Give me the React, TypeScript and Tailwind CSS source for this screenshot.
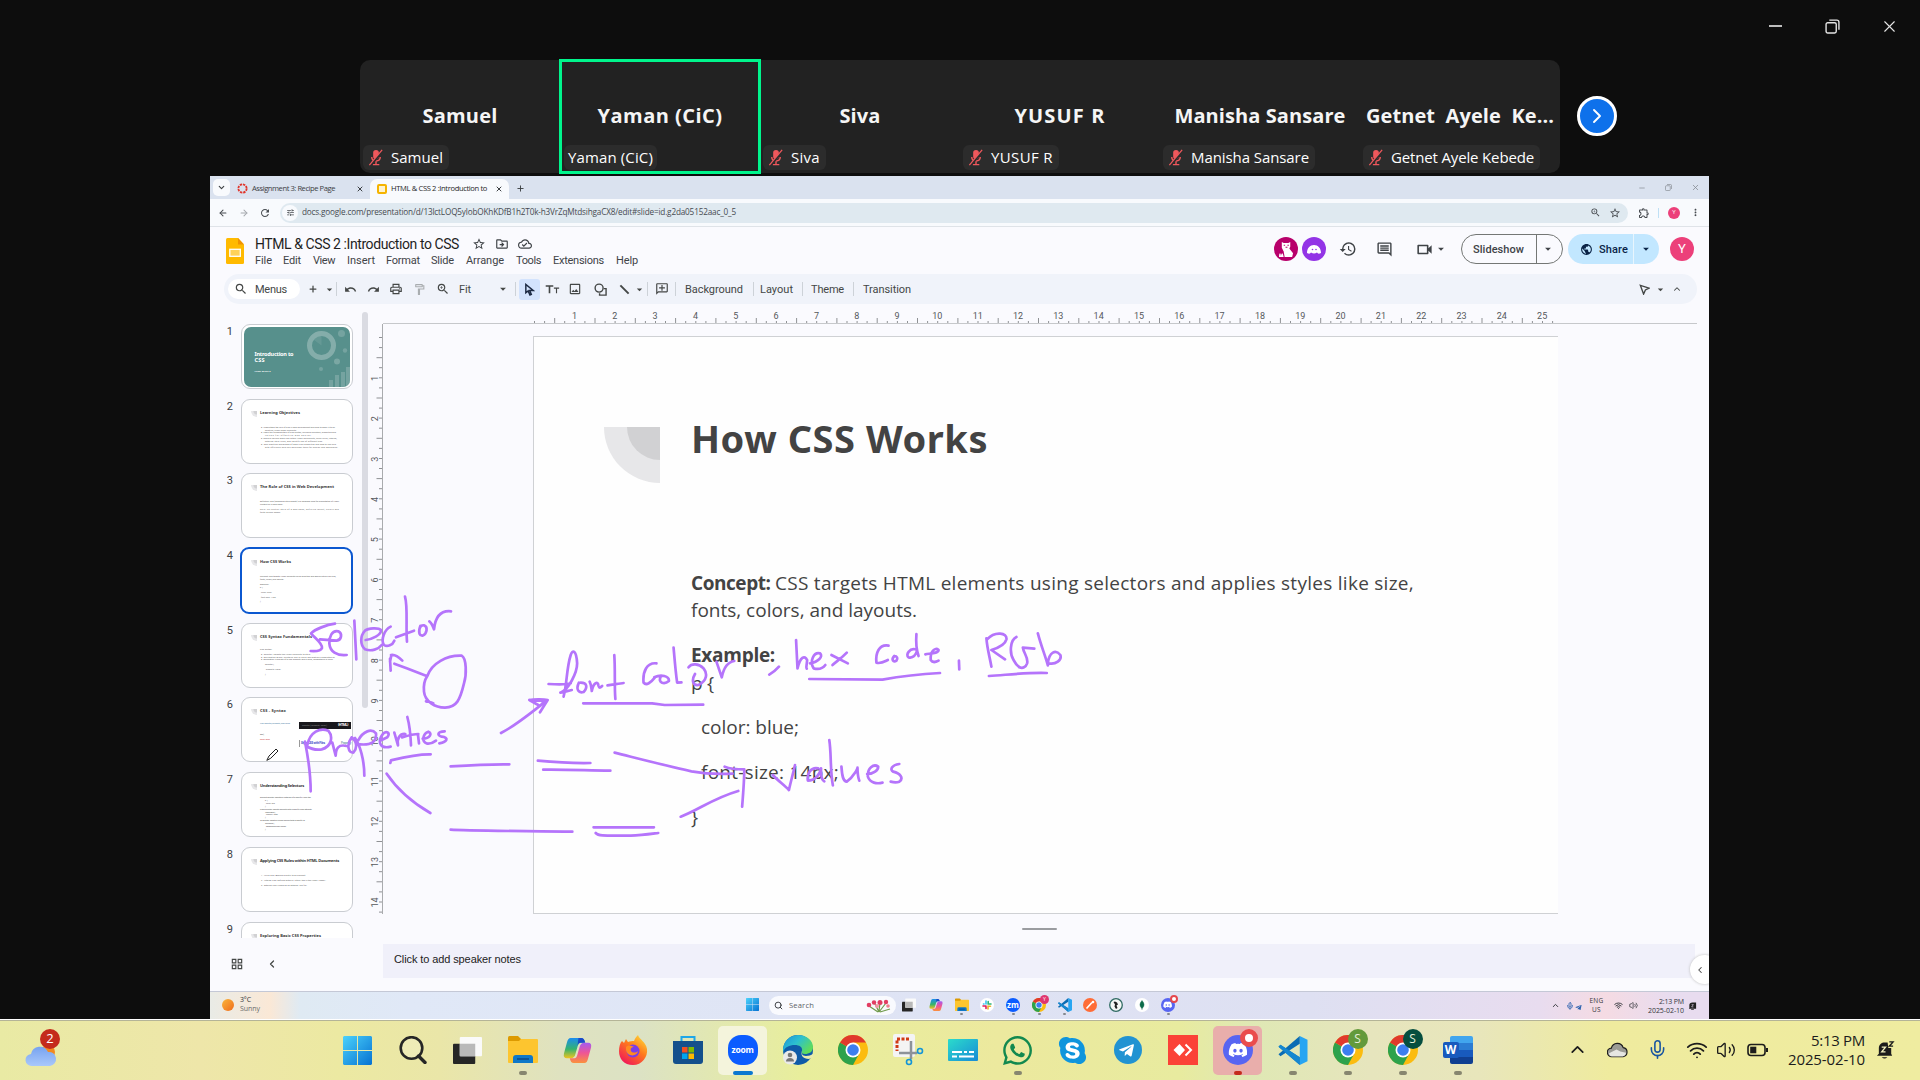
import { useLayoutEffect, useRef, useState, type ReactNode } from "react";
import { Minus, X, ChevronRight, ChevronLeft, ChevronUp, ChevronDown, Plus, ArrowLeft, ArrowRight, Mic, Wifi, Volume2, Search } from "lucide-react";
import { FaDiscord, FaWhatsapp, FaTelegramPlane, FaSkype } from "react-icons/fa";
import {
  MdOutlineStarBorder, MdOutlineDriveFileMove, MdOutlineCloudDone, MdHistory, MdOutlineComment, MdOutlineVideocam,
  MdPublic, MdSearch, MdUndo, MdRedo, MdOutlinePrint, MdOutlineFormatPaint, MdZoomIn, MdArrowDropDown, MdTitle,
  MdOutlineImage, MdOutlineAddComment, MdMoreVert, MdOutlineExtension, MdRefresh, MdOutlineGridView, MdTune,
} from "react-icons/md";

/* Text set to a given measure by adjusting its letter spacing. */
function Fit({ w, children, className = "" }: { w: number; children: string; className?: string }) {
  const ref = useRef<HTMLSpanElement>(null);
  const [ls, setLs] = useState(0);
  useLayoutEffect(() => {
    if (ref.current) {
      const natural = ref.current.getBoundingClientRect().width;
      setLs((w - natural) / children.length);
    }
  }, []);
  return (
    <span ref={ref} style={{ letterSpacing: ls }} className={`inline-block w-max shrink-0 whitespace-pre leading-none ${className}`}>
      {children}
    </span>
  );
}

const Slot = ({ c, children }: { c: string; children?: ReactNode }) => (
  <div className={`flex shrink-0 items-center justify-center ${c}`}>{children}</div>
);

/* ---------- Meeting header ---------- */

const people = [
  { name: "Samuel", bw: 75, sw: 52, muted: true },
  { name: "Yaman (CiC)", bw: 125, sw: 85, muted: false },
  { name: "Siva", bw: 41, sw: 29, muted: true },
  { name: "YUSUF R", bw: 91, sw: 62, muted: true },
  { name: "Manisha Sansare", bw: 171, sw: 118, muted: true },
  { name: "Getnet Ayele Kebede", bw: 188, sw: 143, muted: true },
];

function Tile({ p }: { p: (typeof people)[number] }) {
  return (
    <div className={`flex shrink-0 flex-col ${p.muted ? "h-[113px] w-[200px]" : "-my-px -ml-px h-[115px] w-[202px] -mr-px border-[3px] border-[#00f58c]"}`}>
      <div className={`flex justify-center ${p.muted ? "mt-[44px]" : "mt-[42px]"} h-[24px] items-center`}>
        <Fit w={p.bw} className="text-[20px] font-bold text-[#f5f5f5]">
          {p.name === "Getnet Ayele Kebede" ? "Getnet  Ayele  Ke..." : p.name}
        </Fit>
      </div>
      <div className={`flex h-[25px] items-center self-start rounded-md bg-[#2c2c2c] text-white ${p.muted ? "ml-[3px] mt-[17px] pr-[6px]" : "ml-[2px] mt-[17px] px-[4px]"}`}>
        {p.muted && (
          <span className="mr-[7px] flex w-[21px] justify-end">
            <svg viewBox="0 0 16 18" className="h-[17px] w-[16px]">
              <rect x="5" y="1" width="6" height="10" rx="3" fill="#f0585c" />
              <path d="M3.5 8.500C3.500 14 12.500 14 12.500 8.500M8 13v3M4.500 16.500h7" stroke="#f0585c" strokeWidth="1.500" fill="none" />
              <path d="M16 1L2.500 17" stroke="#2c2c2c" strokeWidth="2.500" />
              <path d="M14.500 1L1 17" stroke="#f0585c" strokeWidth="1.400" />
            </svg>
          </span>
        )}
        <Fit w={p.sw} className="text-[15px]">{p.name}</Fit>
      </div>
    </div>
  );
}

/* ---------- App logos ---------- */

const WinLogo = ({ c }: { c: string }) => (
  <svg viewBox="0 0 30 30" className={c}>
    <defs>
      <linearGradient id="wl" x1="0" y1="0" x2="1" y2="1"><stop offset="0" stopColor="#4cd2fb" /><stop offset="1" stopColor="#0672d2" /></linearGradient>
    </defs>
    <path d="M1 0h13.500v14.500H0V1zM15.500 0H29l1 1v13.500H15.500zM0 15.500h14.500V30H1l-1-1zM15.500 15.500H30V29l-1 1H15.500z" fill="url(#wl)" />
  </svg>
);
const TaskView = ({ c }: { c: string }) => (
  <svg viewBox="0 0 30 30" className={c}>
    <rect x="0" y="8" width="23" height="21" rx="1" fill="#262626" />
    <rect x="7" y="1" width="23" height="20" rx="1" fill="#fafafa" />
    <rect x="7" y="8" width="16" height="13" fill="#b9b9b9" />
  </svg>
);
const Folder = ({ c }: { c: string }) => (
  <svg viewBox="0 0 30 30" className={c}>
    <path d="M0 2.500Q0 1 1.500 1H10l3 3v4H0z" fill="#dd9a00" />
    <path d="M0 6h11l2-2h16q1 0 1 1v22q0 1-1 1H1q-1 0-1-1z" fill="#fdc52f" />
    <path d="M5 28v-5q0-3 3-3h14q3 0 3 3v5z" fill="#0f78c8" />
    <path d="M9 24h12" stroke="#073d78" strokeWidth="1.200" />
  </svg>
);
const Copilot = ({ c }: { c: string }) => (
  <svg viewBox="0 0 30 30" className={c}>
    <defs>
      <linearGradient id="cpa" x1="0" y1="0" x2="0" y2="1"><stop offset="0" stopColor="#1a8cf0" /><stop offset=".55" stopColor="#35b36e" /><stop offset="1" stopColor="#f2c41d" /></linearGradient>
      <linearGradient id="cpb" x1="0" y1="0" x2="0" y2="1"><stop offset="0" stopColor="#a45bf0" /><stop offset=".5" stopColor="#ee5596" /><stop offset="1" stopColor="#fb923c" /></linearGradient>
    </defs>
    <path d="M8 2h11q3 0 4 5h-5q-2 0-3 4l-2 7q-1 5-5 5H4q-4 0-3-5L4 7q1-5 4-5z" fill="url(#cpa)" />
    <path d="M16 2h3q3 0 4 5h-5q-2 0-3 3z" fill="#1b49c8" />
    <path d="M22 28H11q-3 0-4-5h5q2 0 3-4l2-7q1-5 5-5h4q4 0 3 5l-3 11q-1 5-4 5z" fill="url(#cpb)" />
  </svg>
);
const Chrome = ({ c }: { c: string }) => (
  <svg viewBox="0 0 30 30" className={c}>
    <circle cx="15" cy="15" r="15" fill="#fbbc10" />
    <path d="M15 15L2 7.500A15 15 0 0 0 15 30l6-11z" fill="#2da24c" />
    <path d="M15 15L2 7.500A15 15 0 0 1 28 7.500H15z" fill="#e0392c" />
    <circle cx="15" cy="15" r="7.500" fill="#fff" />
    <circle cx="15" cy="15" r="5.800" fill="#3c7ef0" />
  </svg>
);
const VsCode = ({ c }: { c: string }) => (
  <svg viewBox="0 0 30 30" className={c}>
    <path d="M22 0L30 4v22l-8 4z" fill="#27a5f2" />
    <path d="M2 9L0 11l22 19V22z" fill="#1276bd" />
    <path d="M2 21L0 19 22 0v8z" fill="#0a6cb4" />
    <path d="M2 9L0 11l22 19v-8z" fill="#1587d0" />
  </svg>
);
const Discord = ({ c, dot }: { c: string; dot: string }) => (
  <div className={`relative flex items-center justify-center rounded-full bg-[#5865f2] text-white ${c}`}>
    <FaDiscord className="h-2/3 w-2/3" />
    <span className={`absolute rounded-full bg-white ${dot}`} />
  </div>
);
const Firefox = () => (
  <svg viewBox="0 0 30 30" className="h-[30px] w-[30px]">
    <defs>
      <linearGradient id="ff" x1=".9" y1="0" x2=".2" y2="1"><stop offset="0" stopColor="#ffe03a" /><stop offset=".45" stopColor="#ff7a1c" /><stop offset="1" stopColor="#f0125c" /></linearGradient>
    </defs>
    <path d="M4 6l2 2 2-4 2 3c2-1 4-1 6-1 1-3 3-5 4-6 1 4 8 7 9 14 1 8-5 16-14 16S1 24 1 16C1 12 2 8 4 6z" fill="url(#ff)" />
    <circle cx="15" cy="16" r="6.500" fill="#7a3ce8" />
    <path d="M8 12c3-3 6-1 8 0-2 0-4 1-3 4 1 2 5 2 7 0-1 6-11 6-12-1z" fill="#ff8a20" />
  </svg>
);
const Store = () => (
  <svg viewBox="0 0 30 30" className="h-[30px] w-[30px]">
    <path d="M8.500 8V2h13v6" stroke="#1ea7e8" strokeWidth="2" fill="none" />
    <path d="M0 6h30v20q0 3-3 3H3q-3 0-3-3z" fill="#14508c" />
    <path d="M9 12h5.500v5.500H9z" fill="#f25022" /><path d="M15.500 12H21v5.500h-5.500z" fill="#7fba00" />
    <path d="M9 18.500h5.500V24H9z" fill="#00a4ef" /><path d="M15.500 18.500H21V24h-5.500z" fill="#ffb900" />
  </svg>
);
const Edge = () => (
  <svg viewBox="0 0 30 30" className="h-[30px] w-[30px]">
    <defs>
      <linearGradient id="eg" x1="0" y1="0" x2="1" y2=".6"><stop offset="0" stopColor="#1b8fd8" /><stop offset=".5" stopColor="#2cc0d0" /><stop offset="1" stopColor="#5fdc5a" /></linearGradient>
    </defs>
    <circle cx="15" cy="15" r="15" fill="#0f5ba8" />
    <path d="M0 14C1 5 8 0 15 0c9 0 15 6 15 12 0 5-4 7-8 7-3 0-4-1-3-3 1-4-3-6-7-6-6 0-10 2-12 7z" fill="url(#eg)" />
    <path d="M19 15c-1 3 0 6 4 6 3 0 5-1 7-2v3l-4 2c-6 0-9-4-7-9z" fill="#eaecae" />
    <circle cx="7" cy="22.500" r="7" fill="#e9e9e9" />
    <circle cx="7" cy="20" r="2.300" fill="#777" /><path d="M3 26.500q0-3.500 4-3.500t4 3.500z" fill="#777" />
  </svg>
);
const Snip = () => (
  <svg viewBox="0 0 30 30" className="h-[30px] w-[30px] overflow-visible">
    <rect x="0" y="-1" width="22" height="23" rx="2" fill="#f4f4f4" />
    <path d="M16 4H4v12" stroke="#d03a14" strokeWidth="3" strokeDasharray="3 1.500" fill="none" />
    <path d="M18 6v18M6 18h18" stroke="#8d9299" strokeWidth="2.500" />
    <circle cx="27" cy="16" r="2.500" stroke="#1495d8" strokeWidth="1.600" fill="none" /><circle cx="16" cy="27" r="2.500" stroke="#1495d8" strokeWidth="1.600" fill="none" />
    <path d="M18 24l-1 1M24 17.500h1" stroke="#1495d8" strokeWidth="1.600" />
  </svg>
);
const Captions = () => (
  <svg viewBox="0 0 30 22" className="h-[22px] w-[30px]">
    <defs><linearGradient id="cc" x1="0" y1="0" x2="1" y2="1"><stop offset="0" stopColor="#2bdccb" /><stop offset="1" stopColor="#188bd6" /></linearGradient></defs>
    <rect width="30" height="22" rx="1" fill="url(#cc)" />
    <path d="M4 13h10M16 13h3M21 13h5M4 17.500h5M11 17.500h15" stroke="#fff" strokeWidth="1.800" />
  </svg>
);
const Word = () => (
  <div className="relative h-[28px] w-[30px]">
    <div className="ml-[7px] flex h-full w-[23px] flex-col overflow-hidden rounded-[2px]">
      <div className="h-[7px] bg-[#41a5ee]" /><div className="h-[7px] bg-[#2b7cd3]" /><div className="h-[7px] bg-[#185abd]" /><div className="h-[7px] bg-[#103f91]" />
    </div>
    <div className="absolute left-0 top-[6px] flex h-[16px] w-[16px] items-center justify-center rounded-[2px] bg-[#185abd] text-[12px] font-bold text-white">W</div>
  </div>
);
const Bell = ({ c }: { c: string }) => (
  <svg viewBox="0 0 20 20" className={c}>
    <path d="M3 14V8c0-4 3-6 6-6h7v12l1 2H1z" fill="#1c1c1c" />
    <path d="M6 17.500h6q-3 3-6 0z" fill="#1c1c1c" />
    <path d="M6 7h4l-4 5h4" stroke="#f2f0c0" strokeWidth="1.400" fill="none" />
    <path d="M12 0h8v8h-7z" fill="#efeca0" />
    <path d="M14 1.500h4L14 6h4" stroke="#1c1c1c" strokeWidth="1.400" fill="none" />
  </svg>
);

/* ---------- Browser window ---------- */

const Restore = ({ c }: { c: string }) => (
  <svg viewBox="0 0 14 14" className={c} fill="none" stroke="currentColor" strokeWidth="1.300">
    <rect x="1" y="3.500" width="9.500" height="9.500" rx="1.500" /><path d="M4 1h7q2 0 2 2v7" />
  </svg>
);

function TabStrip() {
  return (
    <div className="flex h-[23px] shrink-0 items-end bg-[#dae2ef] pl-[3px] text-[#3c4043]">
      <Slot c="mb-[3px] h-[17px] w-[17px] rounded-[5px] bg-[#f8fafd]"><ChevronDown size={9} strokeWidth={3} /></Slot>
      <div className="flex h-[21px] w-[140px] items-center pl-[7px]">
        <svg viewBox="0 0 12 12" className="mr-[4px] h-[11px] w-[11px]"><circle cx="6" cy="6" r="4.500" fill="none" stroke="#e0352b" strokeWidth="2" strokeDasharray="2.600 .93" /></svg>
        <Fit w={83} className="text-[7.600px]">Assignment 3: Recipe Page</Fit>
        <X size={8} strokeWidth={3} className="ml-[21px]" />
      </div>
      <div className="flex h-[20px] w-[139px] items-center rounded-t-[7px] bg-[#f8fafd] pl-[7px]">
        <div className="mr-[4px] h-[10px] w-[10px] rounded-[2px] border-2 border-[#f5b400] bg-[#fff3cd]" />
        <Fit w={96} className="text-[7.600px] text-[#1f1f1f]">HTML &amp; CSS 2 :Introduction to</Fit>
        <X size={8} strokeWidth={3} className="ml-[8px]" />
      </div>
      <Slot c="h-[21px] w-[23px]"><Plus size={9} strokeWidth={2.5} /></Slot>
      <div className="ml-auto flex h-[23px] items-center text-[#83888f]">
        <Slot c="w-[27px]"><Minus size={8} /></Slot>
        <Slot c="w-[27px]"><Restore c="h-[7px] w-[7px]" /></Slot>
        <Slot c="w-[27px]"><X size={9} /></Slot>
      </div>
    </div>
  );
}

function AddressBar() {
  return (
    <div className="flex h-[28px] shrink-0 items-center border-b border-[#dfe3e8] bg-[#f8fafd] text-[#474b50]">
      <Slot c="ml-[3px] w-[20px]"><ArrowLeft size={10} strokeWidth={2.5} /></Slot>
      <Slot c="w-[21px] text-[#a4a8ad]"><ArrowRight size={10} strokeWidth={2.5} /></Slot>
      <Slot c="w-[22px]"><MdRefresh size={12} /></Slot>
      <div className="ml-[4px] flex h-[20px] w-[1348px] items-center rounded-full bg-[#dfe9f0]">
        <Slot c="ml-[2px] mr-[4px] h-[16px] w-[16px] rounded-full bg-[#f8fafd]"><MdTune size={9} /></Slot>
        <Fit w={434} className="text-[8.200px]">docs.google.com/presentation/d/13lctLOQ5ylobOKhKDfB1h2T0k-h3VrZqMtdsihgaCX8/edit#slide=id.g2da05152aac_0_5</Fit>
        <Slot c="ml-auto w-[19px]"><MdZoomIn size={11} /></Slot>
        <Slot c="mr-[4px] w-[19px]"><MdOutlineStarBorder size={12} /></Slot>
      </div>
      <Slot c="ml-[5px] w-[21px]"><MdOutlineExtension size={12} /></Slot>
      <div className="ml-[4px] h-[10px] w-px bg-[#bfe0f5]" />
      <Slot c="ml-[9px] h-[12px] w-[12px] rounded-full bg-[#ec407a] text-[6px] text-white">Y</Slot>
      <Slot c="ml-[5px] w-[20px]"><MdMoreVert size={11} /></Slot>
    </div>
  );
}

const menus: [string, number, string][] = [
  ["File", 17, ""], ["Edit", 18, "ml-[11px]"], ["View", 22, "ml-[12px]"], ["Insert", 28, "ml-[12px]"], ["Format", 34, "ml-[11px]"],
  ["Slide", 23, "ml-[11px]"], ["Arrange", 38, "ml-[12px]"], ["Tools", 25, "ml-[12px]"], ["Extensions", 51, "ml-[12px]"], ["Help", 22, "ml-[12px]"],
];

function DocHeader() {
  return (
    <div className="flex h-[48px] shrink-0 items-start text-[#3f4347]">
      <svg viewBox="0 0 18 26" className="ml-[16px] mt-[11px] h-[26px] w-[18px] shrink-0">
        <path d="M1.500 0H12l6 6.500v18q0 1.500-1.500 1.500h-15Q0 26 0 24.500v-23Q0 0 1.500 0z" fill="#ffba00" />
        <path d="M12 0l6 6.500h-6z" fill="#f09300" />
        <rect x="3.800" y="11.300" width="10.500" height="7" fill="#ffd25a" stroke="#fff" strokeWidth="1.300" />
      </svg>
      <div className="ml-[11px] mt-[8px] flex flex-col">
        <div className="flex h-[17px] items-center">
          <Fit w={204} className="text-[14px] text-[#1f1f1f]">HTML &amp; CSS 2 :Introduction to CSS</Fit>
          <Slot c="ml-[8px] w-[23px]"><MdOutlineStarBorder size={14} /></Slot>
          <Slot c="w-[23px]"><MdOutlineDriveFileMove size={14} /></Slot>
          <Slot c="w-[24px]"><MdOutlineCloudDone size={14} /></Slot>
        </div>
        <div className="flex h-[16px] items-center">
          {menus.map(([m, w, ml]) => (
            <span key={m} className={`flex ${ml}`}><Fit w={w} className="text-[11px]">{m}</Fit></span>
          ))}
        </div>
      </div>
      <div className="ml-auto mt-[7px] flex h-[30px] items-center">
        <Slot c="h-[24px] w-[24px] rounded-full bg-[#b8006b]">
          <svg viewBox="0 0 16 18" className="h-[17px] w-[15px]" fill="#fff">
            <path d="M3 1l2 1h5l2-1v5l-1 2 4 5-1 4H6l-1-6-2-4z" /><path d="M0 17c0-5 2-5 2-1 1-4 2-4 3 1z" />
            <path d="M5 4h1.500v1H5zM9 4h1.500v1H9zM7 6h2v1H7z" fill="#b8006b" />
          </svg>
        </Slot>
        <Slot c="ml-[4px] h-[24px] w-[24px] rounded-full bg-[#9334e6]">
          <svg viewBox="0 0 16 10" className="h-[10px] w-[16px]"><path d="M1 9C1 4 4 1 8 1s7 3 7 8q-3 1.500-4-.5-3 2-6 0-1 2-4 .5z" fill="#fff" /><circle cx="6.500" cy="5.500" r=".8" fill="#9334e6" /><circle cx="10" cy="5.500" r=".8" fill="#9334e6" /></svg>
        </Slot>
        <Slot c="ml-[4px] w-[36px]"><MdHistory size={18} /></Slot>
        <Slot c="w-[36px]"><MdOutlineComment size={17} /></Slot>
        <Slot c="ml-[12px] w-[20px]"><MdOutlineVideocam size={19} /></Slot>
        <Slot c="w-[14px]"><MdArrowDropDown size={14} /></Slot>
        <div className="ml-[13px] flex h-[30px] w-[102px] items-center rounded-full border border-[#747775]">
          <Fit w={51} className="ml-[11px] text-[11px] font-medium">Slideshow</Fit>
          <div className="ml-[12px] h-full w-px bg-[#747775]" />
          <Slot c="w-[22px]"><MdArrowDropDown size={14} /></Slot>
        </div>
        <div className="ml-[5px] flex h-[30px] w-[91px] items-center rounded-full bg-[#c2e7ff] text-[#0b2447]">
          <MdPublic size={13} className="ml-[12px]" />
          <Fit w={29} className="ml-[6px] text-[11px] font-medium">Share</Fit>
          <div className="ml-[5px] h-full w-px bg-[#e8f5fd]" />
          <Slot c="w-[24px]"><MdArrowDropDown size={14} /></Slot>
        </div>
        <Slot c="ml-[11px] mr-[15px] h-[24px] w-[24px] rounded-full bg-[#ec407a] text-[13px] text-white">Y</Slot>
      </div>
    </div>
  );
}

const Bar = ({ c }: { c: string }) => <div className={`h-[14px] w-px shrink-0 bg-[#cdd2d8] ${c}`} />;

function Toolbar() {
  return (
    <div className="-mt-px ml-[14px] flex h-[30px] w-[1473px] shrink-0 items-center rounded-full bg-[#f0f3fa] text-[#444746]">
      <div className="ml-[4px] flex h-[20px] w-[72px] items-center rounded-full bg-white">
        <MdSearch size={14} className="ml-[6px]" />
        <Fit w={32} className="ml-[7px] text-[11px]">Menus</Fit>
      </div>
      <Slot c="ml-[4px] w-[18px]"><Plus size={10} strokeWidth={3} /></Slot>
      <Slot c="w-[14px]"><MdArrowDropDown size={13} /></Slot>
      <Bar c="" />
      <Slot c="w-[26px]"><MdUndo size={13} /></Slot>
      <Slot c="w-[21px]"><MdRedo size={13} /></Slot>
      <Slot c="w-[24px]"><MdOutlinePrint size={14} /></Slot>
      <Slot c="w-[22px] text-[#a9adb0]"><MdOutlineFormatPaint size={13} /></Slot>
      <Slot c="w-[26px]"><MdZoomIn size={14} /></Slot>
      <div className="ml-[3px] flex w-[36px]"><Fit w={12} className="text-[11px]">Fit</Fit></div>
      <Slot c="w-[16px]"><MdArrowDropDown size={14} /></Slot>
      <Bar c="ml-[4px]" />
      <Slot c="ml-[3px] h-[21px] w-[21px] rounded-[3px] bg-[#d3e3fd]">
        <svg viewBox="0 0 12 14" className="h-[13px] w-[11px]" fill="none" stroke="#1d2b45" strokeWidth="1.600"><path d="M2 1.500v9l2.500-2 2 4.500 1.500-.7-1.800-4.300H10z" /></svg>
      </Slot>
      <Slot c="w-[23px]"><span className="flex items-center"><MdTitle size={13} /><MdTitle size={9} className="-ml-[4px] mt-[2px]" /></span></Slot>
      <Slot c="w-[24px]"><MdOutlineImage size={14} /></Slot>
      <Slot c="w-[26px]">
        <svg viewBox="0 0 14 14" className="h-[13px] w-[13px]" fill="none" stroke="currentColor" strokeWidth="1.500"><circle cx="5.500" cy="5.500" r="4.300" /><path d="M10.500 6H13v7H6v-2" /></svg>
      </Slot>
      <Slot c="w-[22px]"><svg viewBox="0 0 12 12" className="h-[11px] w-[11px]"><path d="M1.500 1.500l9 9" stroke="currentColor" strokeWidth="2.200" /></svg></Slot>
      <Slot c="w-[9px]"><MdArrowDropDown size={13} className="shrink-0" /></Slot>
      <Bar c="ml-[3px]" />
      <Slot c="w-[27px]"><MdOutlineAddComment size={14} className="-scale-x-100" /></Slot>
      <Bar c="" />
      <Fit w={58} className="ml-[9px] text-[11px]">Background</Fit>
      <Bar c="ml-[10px]" />
      <Fit w={33} className="ml-[6px] text-[11px]">Layout</Fit>
      <Bar c="ml-[9px]" />
      <Fit w={33} className="ml-[8px] text-[11px]">Theme</Fit>
      <Bar c="ml-[9px]" />
      <Fit w={48} className="ml-[9px] text-[11px]">Transition</Fit>
      <div className="ml-auto flex items-center pr-[12px]">
        <Slot c="w-[16px]"><svg viewBox="0 0 12 12" className="h-[11px] w-[11px]" fill="none" stroke="currentColor" strokeWidth="1.500"><path d="M1.500 1.500l9.500 3-4 2-2 4.500z" /></svg></Slot>
        <Slot c="w-[17px]"><MdArrowDropDown size={13} /></Slot>
        <Slot c="w-[16px]"><ChevronUp size={10} strokeWidth={2.5} /></Slot>
      </div>
    </div>
  );
}

/* ---------- Filmstrip ---------- */

type Line = [string, number, string?];
const slides: { title: string; w: number; top: string; lines: Line[] }[] = [
  { title: "", w: 0, top: "", lines: [] },
  { title: "Learning Objectives", w: 40, top: "mt-[11px]", lines: [
    ["●  Understand the role of CSS in web development and how to apply it to an", 74, "pl-[1px]"], ["existing HTML page elements.", 32, "pl-[5px]"],
    ["●  Learn the fundamentals of CSS syntax, including selectors, properties and", 75, "pl-[1px]"], ["values for effective web design.", 47, "pl-[5px]"],
    ["●  Explore various ways CSS within HTML documents, using inline, internal,", 76, "pl-[1px]"], ["external style rules, and identify use of different CSS.", 58, "pl-[5px]"],
    ["●  Gain practical knowledge of basic CSS properties and how to use CSS", 75, "pl-[1px]"], ["with efficiency and use developer tools for design and debugging.", 73, "pl-[5px]"]] },
  { title: "The Role of CSS in Web Development", w: 74, top: "mt-[11px]", lines: [
    ["Definition: CSS (Cascading Style Sheets) is a language used for presentation of HTML", 79], ["content on a web page.", 23], ["", 0], ["Role: To control style of a web page, defining layout, colors and", 79], ["fonts across pages.", 21]] },
  { title: "How CSS Works", w: 31, top: "mt-[11px]", lines: [
    ["Concept: CSS targets HTML elements using selectors and applies styles like size,", 76], ["fonts, colors, and layouts.", 24], ["", 0], ["Example:", 9], ["p {", 3], ["", 0], ["color: blue;", 11, "pl-[1px]"], ["", 0], ["font-size: 14px;", 15, "pl-[1px]"], ["", 0], ["}", 1]] },
  { title: "CSS Syntax Fundamentals", w: 52, top: "mt-[9px]", lines: [
    ["CSS Syntax:", 12], ["", 0], ["●  Selector: Targets the HTML elements to style.", 50, "pl-[1px]"], ["●  Declaration Block: Contains one or more declarations separated by", 74, "pl-[1px]"], ["●  Declaration: Consists of a CSS property and a value, separated by a colon", 72, "pl-[1px]"], ["", 0], ["selector {", 9, "pl-[5px]"], ["", 0], ["property: value;", 15, "pl-[6px]"], ["", 0], ["}", 1, "pl-[5px]"]] },
  { title: "CSS - Syntax", w: 26, top: "mt-[11px]", lines: [] },
  { title: "Understanding Selectors", w: 44, top: "mt-[8px]", lines: [
    ["Element Selector: Targets all instances of a specific HTML tag.", 51], ["p {", 3, "pl-[5px]"], ["color: red;", 9, "pl-[6px]"], ["}", 1, "pl-[5px]"], ["Class Selector: Targets elements with a specific class attribute.", 52], [".class-name {", 10, "pl-[5px]"], ["margin: 10px;", 12, "pl-[6px]"], ["}", 1, "pl-[5px]"], ["ID Selector: Targets a unique element with a specific ID.", 45], ["#unique-id {", 9, "pl-[5px]"], ["background-color: yellow;", 20, "pl-[6px]"], ["}", 1, "pl-[5px]"]] },
  { title: "Applying CSS Rules within HTML Documents", w: 79, top: "mt-[11px]", lines: [
    ["1.  Inline CSS: Applied directly to an element.", 45, "pl-[1px]"], ["", 0], ["2.  Internal CSS: Defined within a <style> tag in the HTML <head>.", 65, "pl-[1px]"], ["", 0], ["3.  External CSS: Linked as an external .css file.", 46, "pl-[1px]"]] },
  { title: "Exploring Basic CSS Properties", w: 61, top: "", lines: [] },
];

const Quarter = ({ c }: { c: string }) => (
  <svg viewBox="0 0 56 56" className={c}>
    <path d="M0 0H56V56A56 56 0 0 1 0 0z" fill="#e7e7e9" />
    <path d="M23 0H56V33A33 33 0 0 1 23 0z" fill="#d1d1d3" />
  </svg>
);

function Cover() {
  return (
    <svg viewBox="0 0 106 60" className="h-[60px] w-[106px] rounded-[7px] bg-[#57908c]" fill="#89b0ad">
      <circle cx="77.500" cy="18.500" r="12" fill="none" stroke="#84adaa" strokeWidth="5" />
      <path d="M77.500 18.500V4A14.500 14.500 0 0 0 66 10z" opacity=".3" />
      <circle cx="97.500" cy="6.500" r="3.500" opacity=".6" /><circle cx="101" cy="23.500" r="2.200" opacity=".6" />
      <circle cx="93" cy="34.500" r="3" opacity=".7" /><circle cx="77" cy="42" r="2" opacity=".6" />
      <path d="M85 53h4v7h-4zM91 48h4v12h-4zM97 45h4v15h-4zM102 40h4v20h-4z" opacity=".6" />
      <g fill="#fff" fontFamily="Noto Sans" fontWeight="700">
        <text x="10.500" y="28.500" fontSize="5.500" textLength="39">Introduction to</text>
        <text x="10.500" y="35" fontSize="5.500" textLength="10">CSS</text>
        <text x="10.500" y="44.500" fontSize="2.400" textLength="16">HTML &amp; CSS 2</text>
      </g>
    </svg>
  );
}

function SyntaxSample() {
  return (
    <div className="ml-[18px] mt-[8px] flex text-[2.300px]">
      <div className="flex w-[39px] flex-col gap-[3px] pt-[1px] text-[#4a4a4a]">
        <Fit w={30} className="text-[#4d7fa8]">Use selector, property, and value</Fit>
        <div className="h-[2px]" />
        <Fit w={4}>{"em {"}</Fit>
        <Fit w={10} className="text-[#c33]">color: blue;</Fit>
      </div>
      <div className="flex w-[52px] flex-col">
        <div className="flex h-[7px] items-center justify-between bg-[#18181c] px-[3px] text-white">
          <Fit w={25} className="text-[#888]">{"selector { property: value }"}</Fit>
          <Fit w={10} className="text-[3.500px] font-bold">{"{HTML}"}</Fit>
        </div>
        <div className="mt-[11px] flex h-[7px] items-center justify-between border-l border-[#999] pl-[1px] font-bold text-[#3b46c8]">
          <Fit w={24} className="text-[3px]">Style CSS with Files</Fit>
          <Fit w={10} className="text-[3px] text-[#7fa3b0]">Property</Fit>
        </div>
      </div>
    </div>
  );
}

function Thumb({ i }: { i: number }) {
  const s = slides[i];
  const sel = i === 3;
  return (
    <div className={`flex shrink-0 ${i === 8 ? "h-[65px]" : "h-[74.7px]"}`}>
      <div className="w-[31px] shrink-0 pr-[8px] text-right text-[11px] text-[#3c4043]">{i + 1}</div>
      <div className={`flex w-[112px] flex-col overflow-hidden rounded-[9px] bg-white ${sel ? "-mt-px -ml-px h-[67px] w-[114px] border-2 border-[#0b57d0]" : "h-[65px] border border-[#c9ccd1]"}`}>
        {i === 0 ? (
          <div className="pl-[2px] pt-[2px]"><Cover /></div>
        ) : (
          <>
            <div className="ml-[9px] mt-[10px] flex h-[6px] items-center font-['Noto_Sans']">
              <Quarter c="mr-[3px] mt-[2px] h-[6px] w-[6px]" />
              <Fit w={s.w} className="text-[4px] font-bold text-[#333]">{s.title}</Fit>
            </div>
            {s.lines.length > 0 && (
              <div className={`ml-[18px] flex flex-col text-[2.100px] text-[#555] ${s.top}`}>
                {s.lines.map(([t, w, pl], k) => (
                  <div key={k} className={`flex shrink-0 ${t ? "h-[2.900px]" : "h-[2px]"} ${pl ?? ""}`}>{t && <Fit w={w}>{t}</Fit>}</div>
                ))}
              </div>
            )}
            {i === 5 && <SyntaxSample />}
          </>
        )}
      </div>
    </div>
  );
}

function Filmstrip() {
  return (
    <div className="flex w-[173px] shrink-0 flex-col">
      <div className="flex h-[634px]">
        <div className="flex h-[634px] w-[143px] shrink-0 flex-col overflow-hidden pt-[20px]">
          {slides.map((_, i) => <Thumb key={i} i={i} />)}
        </div>
        <div className="ml-[9px] mt-[8px] h-[396px] w-[6px] rounded-full bg-[#dadbe2]" />
      </div>
      <div className="flex h-[52px] items-center text-[#444746]">
        <Slot c="ml-[15px] w-[24px]"><MdOutlineGridView size={14} /></Slot>
        <Slot c="ml-[11px] w-[24px]"><ChevronLeft size={12} strokeWidth={2.5} /></Slot>
      </div>
    </div>
  );
}

/* ---------- Canvas ---------- */

const hTicks = Array.from({ length: 102 }, (_, i) => i);
const vTicks = Array.from({ length: 58 }, (_, i) => i);

function HRuler() {
  return (
    <svg viewBox="0 0 1314 20" className="h-[20px] w-[1314px] shrink-0" stroke="#8f9194" strokeWidth="1">
      <path d="M0 19.500H1314" stroke="#c6c8cb" />
      <path d={hTicks.map((i) => `M${(151.5 + i * 10.08).toFixed(1)} 19V${i % 4 === 2 ? 14 : 17}`).join("")} />
      <g fill="#55585c" stroke="none" fontSize="9" textAnchor="middle" fontFamily="Roboto">
        {Array.from({ length: 25 }, (_, n) => <text key={n} x={191.5 + n * 40.32} y="15">{n + 1}</text>)}
      </g>
    </svg>
  );
}

function VRuler() {
  return (
    <svg viewBox="0 0 16 590" className="-ml-[16px] h-[590px] w-[16px] shrink-0" stroke="#8f9194">
      <path d="M15.500 0V590" stroke="#a9abae" />
      <path d={vTicks.map((i) => `M15 ${(13.5 + i * 10.08).toFixed(1)}H${i % 4 === 2 ? 9.5 : 12}`).join("")} />
      <g fill="#55585c" stroke="none" fontSize="9" textAnchor="middle" fontFamily="Roboto">
        {Array.from({ length: 14 }, (_, n) => <text key={n} transform={`translate(11 ${54.5 + n * 40.3}) rotate(-90)`}>{n + 1}</text>)}
      </g>
    </svg>
  );
}

function Slide() {
  return (
    <div className="flex h-[578px] w-[1025px] flex-col border-y border-l border-[#cfd1d4] bg-[#fefefe] font-['Open_Sans'] text-[#434343]">
      <div className="ml-[70px] mt-[90px] flex h-[56px]">
        <Quarter c="h-[56px] w-[56px]" />
        <Fit w={297} className="ml-[31px] -mt-[8px] text-[38px] font-bold font-['Noto_Sans']">How CSS Works</Fit>
      </div>
      <div className="ml-[157px] flex flex-col text-[19px]">
        <div className="mt-[86px] flex h-[28px] items-center">
          <Fit w={84} className="font-bold">Concept: </Fit>
          <Fit w={639}>CSS targets HTML elements using selectors and applies styles like size,</Fit>
        </div>
        <div className="flex h-[27px] items-center"><Fit w={226}>fonts, colors, and layouts.</Fit></div>
        <div className="mt-[17px] flex h-[28px] items-center"><Fit w={84} className="font-bold">Example:</Fit></div>
        <div className="flex h-[28px] items-center"><Fit w={23}>{"p {"}</Fit></div>
        <div className="mt-[16px] flex h-[28px] items-center pl-[10px]"><Fit w={98}>color: blue;</Fit></div>
        <div className="mt-[17px] flex h-[28px] items-center pl-[10px]"><Fit w={138}>font-size: 14px;</Fit></div>
        <div className="mt-[17px] flex h-[28px] items-center">{"}"}</div>
      </div>
    </div>
  );
}

/* Freehand annotation strokes drawn over the shared screen. */
function Ink() {
  return (
    <svg viewBox="0 0 1920 1080" className="pointer-events-none absolute left-0 top-0 h-[1080px] w-[1920px] [&_path]:[vector-effect:non-scaling-stroke]" fill="none" stroke="#b574fb" strokeWidth="2.700" strokeLinecap="round" strokeLinejoin="round">
      <g transform="translate(200 620) scale(.33333)">
        <path d="M405 11C380 14 345 28 333 40C345 55 368 70 366 84C362 94 345 94 332 93M360 58L410 62C425 60 428 40 415 34C395 30 388 50 388 70C390 95 410 108 440 105M463 2L469 118" />
        <path d="M497 60C515 58 545 45 543 30C535 22 505 24 495 32C480 48 480 75 495 88C515 95 535 88 545 75M572 20C552 30 542 60 552 75C562 82 578 75 583 62M615 -70C624 -40 617 20 621 65M588 52L642 32M661 18C653 40 660 48 668 47C682 40 684 20 672 16C666 15 661 18 661 22M688 4C696 10 700 22 702 28C705 0 715 -30 753 -26" />
        <path d="M680 168L620 145L583 131M572 152L570 116M573 105C585 102 595 110 607 122M574 106L570 125M682 168C695 130 740 105 785 107C800 115 800 165 792 190C780 240 770 262 735 263C705 262 675 245 672 215C670 195 675 178 682 168M678 244C688 246 694 246 700 250" />
        <path d="M315 365C322 400 332 450 332 514M322 375C330 335 360 322 385 332C400 350 395 380 365 388C345 392 330 385 318 378M397 368L407 407C408 385 415 372 440 378M455 352C438 375 445 398 460 398C472 385 472 365 455 352M465 354C480 375 493 420 493 467M474 362C490 332 515 325 528 340C530 365 515 376 480 373" />
        <path d="M545 360L562 352C572 338 560 332 550 340C530 365 540 388 572 380M583 338L594 376C590 355 600 340 616 342M622 291C630 320 632 350 633 376M606 352C630 345 645 342 655 342M654 345L657 370M668 356C690 355 698 340 685 335C670 340 662 365 682 371C692 372 700 368 708 362M734 334C710 335 712 346 725 350C748 352 742 366 718 370" />
        <path d="M571 429L573 421C610 412 650 402 692 403M752 439C800 436 870 432 928 433M560 461C600 520 650 555 691 579M752 629C800 633 1000 633 1117 635M903 339C950 315 990 280 1040 242M988 240C1000 238 1030 237 1043 240L1020 277M988 240L1020 258L1035 242L1000 242" />
      </g>
      <g transform="translate(520 600) scale(.35714 .33333)">
        <path d="M80 252C110 254 130 254 142 250M113 278C135 270 160 220 160 190C158 150 147 148 142 165C130 205 132 250 122 290M113 278C125 276 135 272 145 270M165 248C155 270 165 280 178 276C190 262 188 248 170 248M195 245C200 255 200 265 201 273C205 250 218 240 220 258C222 266 226 262 230 258M264 165C267 210 264 260 267 297M245 256C260 254 280 250 290 249M177 310H370L405 315L513 314" />
        <path d="M382 190C355 187 343 215 346 248C354 258 366 248 378 232M376 232C395 222 418 228 417 243C405 254 385 250 394 230M430 143C433 180 436 220 440 248L452 247M472 202C480 190 500 190 514 205C525 220 525 240 500 255C483 258 480 240 490 222M550 185L565 232C570 205 580 186 600 183M725 200C715 212 708 218 698 224" />
        <path d="M773 120L777 205C785 170 797 165 804 180C803 195 800 205 803 206M812 190C835 185 850 170 840 160C822 155 810 185 822 205C840 210 848 205 855 195M872 165L918 190M915 158C900 175 885 185 875 195M1032 137C1005 132 995 160 998 188C1010 192 1020 185 1030 180M1048 168C1038 180 1046 188 1054 182C1059 175 1056 168 1048 168M1110 102C1108 130 1110 150 1116 168M1107 148C1092 143 1078 165 1088 172C1100 175 1108 165 1112 152M1135 163C1150 160 1172 160 1172 150C1162 140 1148 155 1150 180C1156 190 1165 186 1172 182M810 237L1015 239C1060 230 1120 222 1176 219M1229 182L1230 208" />
        <path d="M1306 115C1308 145 1315 170 1320 200M1308 118C1330 92 1365 98 1362 118C1358 135 1335 145 1320 150L1358 178M1390 111C1372 120 1370 160 1382 180C1388 192 1396 202 1404 204M1440 146L1408 143C1410 160 1424 172 1420 190C1416 202 1408 206 1398 202M1450 100C1460 140 1470 165 1478 196M1478 190C1482 155 1500 148 1513 165C1518 180 1500 195 1480 190M1313 228C1370 224 1420 217 1475 219" />
        <path d="M50 482C100 487 150 490 197 489M65 509C130 508 180 511 253 512M265 458C340 478 420 500 480 514C520 522 560 523 595 521M573 500C590 507 610 508 628 508C628 540 625 580 622 620M450 650C500 630 540 595 611 573M206 682H375M212 699C220 709 240 707 310 707C340 706 365 702 387 699" />
        <path d="M708 525C720 540 740 555 753 570C758 545 765 520 770 495M835 505C815 500 803 520 806 542C825 542 840 525 843 505C842 525 845 540 852 544M866 420C872 460 868 510 876 556M900 500C902 530 905 545 915 545C935 530 945 505 945 503C945 520 946 530 950 542M972 522C990 522 1003 510 1003 500C990 490 972 505 974 530C980 550 1000 552 1015 548M1062 492C1040 495 1035 510 1045 515C1065 520 1075 535 1062 545C1055 548 1045 547 1038 545" />
      </g>
      <g transform="translate(267 749)" strokeWidth="1"><path d="M0 11L2 7L9 0L11 2L4 9Z" stroke="#222" fill="#fff" /></g>
    </svg>
  );
}

/* ---------- Shared screen taskbar ---------- */

const Dot = () => <span className="mt-[1px] h-[2px] w-[3px] rounded-full bg-[#85888f]" />;
const Mini = ({ w, run, children }: { w: string; run?: boolean; children: ReactNode }) => (
  <div className={`flex shrink-0 flex-col items-center pt-[6px] ${w}`}>{children}{run && <Dot />}</div>
);

function InnerTaskbar() {
  return (
    <div className="flex h-[28px] shrink-0 items-start border-t border-[#c4c8d6] bg-[linear-gradient(90deg,#e9ebe6_0,#fae8d6_60px,#dfeaf3_90px,#e0e8f7_200px,#dee0f2_1100px,#e8dcef_1330px,#f5dbe3_1395px,#e8dcef_1460px)] font-['Open_Sans'] text-[#33363b]">
      <div className="ml-[12px] mt-[7px] h-[12px] w-[12px] rounded-full bg-gradient-to-br from-[#f9b53a] to-[#ee6a1c]" />
      <div className="ml-[6px] mt-[4px] flex w-[20px] flex-col gap-[2px]">
        <Fit w={11} className="text-[7px]">3°C</Fit>
        <Fit w={20} className="text-[7px] text-[#6b6b6b]">Sunny</Fit>
      </div>
      <div className="ml-[475px] flex h-full">
        <Mini w="w-[34px]"><WinLogo c="h-[13px] w-[13px]" /></Mini>
        <div className="mt-[4px] flex h-[19px] w-[127px] items-center rounded-full bg-[#f9fafe] pl-[5px]">
          <Search size={9} strokeWidth={2.5} />
          <Fit w={25} className="ml-[6px] text-[7.600px] text-[#5c5f66]">Search</Fit>
          <svg viewBox="0 0 25 14" className="ml-[52px] h-[14px] w-[25px]">
            <path d="M3 7l9 6M8 3l5 10M20 4l-7 9M24 10l-10 3M14 4l-1 8" stroke="#6f9a4a" strokeWidth="1.200" />
            <g fill="#e23d63"><circle cx="3" cy="6" r="2.300" /><circle cx="8" cy="3.500" r="2.200" /><circle cx="14" cy="3.500" r="2.500" /><circle cx="20" cy="3" r="2.200" /></g><circle cx="22" cy="7" r="1.800" fill="#ef7f8f" /><circle cx="11" cy="7" r="2" fill="#f29aa6" />
          </svg>
        </div>
        <Mini w="w-[26px]"><TaskView c="h-[14px] w-[14px]" /></Mini>
        <Mini w="w-[27px]"><Copilot c="h-[14px] w-[14px]" /></Mini>
        <Mini w="w-[25px]" run><Folder c="h-[14px] w-[14px]" /></Mini>
        <Mini w="w-[26px]">
          <svg viewBox="0 0 14 14" className="h-[14px] w-[14px]"><circle cx="7" cy="7" r="7" fill="#fff" /><g strokeWidth="1.600" strokeLinecap="round"><path d="M6 3v3M3.500 6H4" stroke="#36c5f0" /><path d="M8 6h3M8.200 3.500V6" stroke="#2eb67d" /><path d="M8 8v3M10.500 8.200H8.500" stroke="#ecb22e" /><path d="M6 8H3M6 8.500v2" stroke="#e01e5a" /></g></svg>
        </Mini>
        <Mini w="w-[26px]" run><Slot c="h-[14px] w-[14px] rounded-full bg-[#0b5cff] text-[8px] font-bold leading-none text-white">zm</Slot></Mini>
        <Mini w="w-[26px]" run><div className="relative"><Chrome c="h-[14px] w-[14px]" /><span className="absolute -right-[3px] -top-[3px] flex h-[9px] w-[9px] items-center justify-center rounded-full bg-[#e0356f] text-[5px] text-white">Y</span></div></Mini>
        <Mini w="w-[25px]" run><VsCode c="h-[14px] w-[14px]" /></Mini>
        <Mini w="w-[26px]"><svg viewBox="0 0 14 14" className="h-[14px] w-[14px]"><circle cx="7" cy="7" r="7" fill="#ff6c37" /><path d="M3.500 10.500L9 4.500" stroke="#fff" strokeWidth="1.700" /><circle cx="10" cy="4" r="1.300" fill="#fff" /></svg></Mini>
        <Mini w="w-[26px]"><svg viewBox="0 0 14 14" className="h-[14px] w-[14px]"><circle cx="7" cy="7" r="6.300" fill="#f6f8f6" stroke="#2f6a62" strokeWidth="1.300" /><path d="M4.500 4l1.500-.5 2 1 1 2-1.500 1 1 2.500-1.500 1-1.500-2.500.5-2z" fill="#222" /></svg></Mini>
        <Mini w="w-[26px]"><svg viewBox="0 0 14 14" className="h-[14px] w-[14px]"><circle cx="7" cy="7" r="7" fill="#fff" /><path d="M7 2.500q4 4.500 0 8-4-3.500 0-8zM7 9v3" fill="#0c6b4a" stroke="#0c6b4a" strokeWidth=".5" /></svg></Mini>
        <Mini w="w-[26px]" run><Discord c="h-[14px] w-[14px]" dot="-right-[3px] -top-[3px] h-[8px] w-[8px] border-2 border-[#e5484d]" /></Mini>
      </div>
      <div className="ml-auto flex h-full items-center">
        <Slot c="w-[16px]"><ChevronUp size={9} strokeWidth={2.5} /></Slot>
        <Slot c="w-[22px] gap-[1px] text-[#2d63b0]"><Mic size={8} strokeWidth={2.5} /><FaTelegramPlane size={7} className="mt-[3px]" /></Slot>
        <div className="flex w-[23px] flex-col items-center gap-[3px]"><Fit w={14} className="text-[6.500px]">ENG</Fit><Fit w={9} className="text-[6.500px]">US</Fit></div>
        <Slot c="ml-[3px] w-[15px]"><Wifi size={9} strokeWidth={2.5} /></Slot>
        <Slot c="w-[14px]"><Volume2 size={9} strokeWidth={2} /></Slot>
        <div className="ml-[7px] flex w-[37px] flex-col items-end gap-[2px]"><Fit w={25} className="text-[7px]">2:13 PM</Fit><Fit w={36} className="text-[7px]">2025-02-10</Fit></div>
        <Slot c="mr-[8px] w-[17px]"><svg viewBox="0 0 10 10" className="h-[10px] w-[9px]"><path d="M1.500 7V4q0-3 3.500-3h4v7H1zM3.500 8.500h3v1h-3z" fill="#222" /><path d="M4 3.500h2L4 6h2" stroke="#e8dcef" strokeWidth=".7" fill="none" /></svg></Slot>
      </div>
    </div>
  );
}

function SharedScreen() {
  return (
    <div className="ml-[210px] flex h-[843px] w-[1499px] flex-col overflow-hidden bg-[#fafafe] font-[Roboto]">
      <div className="flex shrink-0 flex-col font-['Open_Sans']"><TabStrip /><AddressBar /></div>
      <DocHeader />
      <Toolbar />
      <div className="flex h-[687px] shrink-0">
        <Filmstrip />
        <div className="flex w-[1326px] flex-col">
          <HRuler />
          <div className="flex h-[619px]">
            <VRuler />
            <div className="ml-[150px] flex flex-col items-start pt-[12px]">
              <Slide />
              <div className="ml-[489px] mt-[14px] h-[2px] w-[35px] rounded bg-[#9a9ca0]" />
            </div>
          </div>
          <div className="flex h-[47px] items-start pt-px">
            <div className="flex h-[34px] w-[1312px] shrink-0 items-center bg-[#f0f0fa] pl-[11px] font-['Liberation_Sans']">
              <Fit w={127} className="-mt-[3px] text-[11px] text-[#222]">Click to add speaker notes</Fit>
            </div>
            <div className="-ml-[5px] mt-[11px] flex h-[29px] w-[30px] shrink-0 items-center rounded-full bg-white pl-[5px] shadow-[0_0_3px_#bbb]"><ChevronLeft size={10} strokeWidth={2.5} className="text-[#444]" /></div>
          </div>
        </div>
      </div>
      <InnerTaskbar />
    </div>
  );
}

/* ---------- Desktop taskbar ---------- */

function App55({ children, run, active = "" }: { children: ReactNode; run?: string; active?: string }) {
  return (
    <div className="flex w-[55px] shrink-0 justify-center">
      <div className={`flex h-[49px] w-[49px] flex-col items-center rounded-[5px] ${active}`}>
        <div className="flex h-[44px] shrink-0 items-center pt-[4px]">{children}</div>
        {run && <span className={`mt-[1px] h-[4px] shrink-0 rounded-full ${run}`} />}
      </div>
    </div>
  );
}

const Badge = ({ c }: { c: string }) => (
  <span className={`absolute -right-[5px] -top-[6px] flex h-[20px] w-[20px] items-center justify-center rounded-full text-[12px] text-[#e6efd9] ${c}`}>S</span>
);

function DesktopTaskbar() {
  const grey = "w-[8px] bg-[#87866f]";
  return (
    <div className="flex h-[61px] shrink-0 items-start border-t border-white bg-[linear-gradient(90deg,#e9eaa4_0,#eee6a9_200px,#ece9a2_340px,#eae6a8_440px,#dfe2c0_560px,#dce2c4_640px,#e8ee9c_800px,#ece99e_1000px,#e8eb9f_1180px,#dfe8b4_1250px,#e6e5bd_1370px,#e8e6bb_1480px,#efeb9e_1610px,#efeca0_1920px)] text-[#1c1c1c] shadow-[inset_0_1px_0_#b4b497]">
      <div className="relative ml-[25px] mt-[23px] h-[24px] w-[32px]">
        <svg viewBox="0 0 32 24" className="h-[24px] w-[32px]">
          <circle cx="23" cy="9" r="7" fill="#f28a1e" />
          <defs><linearGradient id="cl" x1="0" y1="0" x2="0" y2="1"><stop offset="0" stopColor="#77a3f0" /><stop offset="1" stopColor="#a9c8fa" /></linearGradient></defs>
          <path d="M7 23a6 6 0 0 1-1-12A9 9 0 0 1 23 9a7 7 0 0 1 2 14z" fill="url(#cl)" />
        </svg>
        <span className="absolute -top-[14px] left-[15px] flex h-[20px] w-[20px] items-center justify-center rounded-full bg-[#c42b1c] text-[13px] text-white">2</span>
      </div>
      <div className="ml-[273px] mt-[6px] flex">
        <App55><WinLogo c="h-[29px] w-[29px]" /></App55>
        <App55>
          <svg viewBox="0 0 28 28" className="h-[28px] w-[28px]" fill="none" stroke="#262626"><circle cx="12.500" cy="12" r="10.800" strokeWidth="2.600" fill="#f4f2cf" fillOpacity=".4" /><path d="M19.500 20L26 26.500" strokeWidth="3.400" strokeLinecap="round" /></svg>
        </App55>
        <App55><TaskView c="h-[29px] w-[29px]" /></App55>
        <App55 run={grey}><Folder c="h-[30px] w-[30px]" /></App55>
        <App55><Copilot c="h-[29px] w-[29px]" /></App55>
        <App55><Firefox /></App55>
        <App55><Store /></App55>
        <App55 active="bg-[#f4f4dc]" run="w-[20px] bg-[#0b78d0]"><Slot c="h-[30px] w-[30px] rounded-[13px] bg-[#0b5cff] text-white"><Fit w={22} className="text-[8.500px] font-bold">zoom</Fit></Slot></App55>
        <App55><Edge /></App55>
        <App55><Chrome c="h-[30px] w-[30px]" /></App55>
        <App55><Snip /></App55>
        <App55><Captions /></App55>
        <App55 run={grey}><FaWhatsapp size={33} className="text-[#12894f]" /></App55>
        <App55><div className="rounded-full bg-[radial-gradient(#fff_55%,transparent_56%)]"><FaSkype size={31} className="text-[#0f95dc]" /></div></App55>
        <App55><Slot c="h-[28px] w-[28px] rounded-full bg-[#2193d2] text-white"><FaTelegramPlane size={17} className="-ml-[3px]" /></Slot></App55>
        <App55><svg viewBox="0 0 30 30" className="h-[30px] w-[30px]"><rect width="30" height="30" fill="#fb4237" /><path d="M11.500 9L17 15l-5.500 6L5.500 15z" fill="#fff" /><path d="M16 9.500L21.500 15 16 20.500" transform="translate(1.500)" stroke="#fff" strokeWidth="2" fill="none" /></svg></App55>
        <App55 active="bg-[#e9aeab]" run="w-[8px] bg-[#c42b1c]"><Discord c="h-[30px] w-[30px]" dot="-right-[5px] -top-[6px] h-[18px] w-[18px] border-[5px] border-[#ea4c4c]" /></App55>
        <App55 run={grey}><VsCode c="h-[29px] w-[30px]" /></App55>
        <App55 run={grey}><div className="relative"><Chrome c="h-[30px] w-[30px]" /><Badge c="bg-[#639a3b]" /></div></App55>
        <App55 run={grey}><div className="relative"><Chrome c="h-[30px] w-[30px]" /><Badge c="bg-[#064e3f]" /></div></App55>
        <App55 run={grey}><Word /></App55>
      </div>
      <div className="ml-auto flex h-[59px] items-center">
        <Slot c="w-[40px]"><ChevronUp size={21} strokeWidth={2} /></Slot>
        <Slot c="w-[40px]">
          <svg viewBox="0 0 22 18" className="h-[17px] w-[21px]" stroke="#1c1c1c" strokeWidth="1.200"><path d="M5 16.500a4.500 4.500 0 0 1-.5-9A6.500 6.500 0 0 1 17 7a4.800 4.800 0 0 1 0 9.500z" fill="#9b9b95" /><path d="M5 16.500q-3-.5-3-3.500l8-4 4 2 6 1.500q-.5 3.500-3.500 4z" fill="#e6e6e2" stroke="none" /></svg>
        </Slot>
        <Slot c="w-[40px] text-[#1a56a0]"><Mic size={21} strokeWidth={1.800} /></Slot>
        <Slot c="w-[40px]"><Wifi size={22} strokeWidth={2} /></Slot>
        <Slot c="ml-[-5px] w-[28px]"><Volume2 size={20} strokeWidth={1.600} /></Slot>
        <Slot c="ml-[3px] w-[30px]">
          <svg viewBox="0 0 22 14" className="h-[14px] w-[22px]" fill="none" stroke="#1c1c1c" strokeWidth="1.600"><rect x="1" y="1.500" width="17" height="11" rx="3" /><rect x="4" y="4.500" width="4.500" height="5" fill="#1c1c1c" /><path d="M20 5v4" strokeWidth="2" /></svg>
        </Slot>
        <div className="ml-[9px] flex w-[83px] flex-col items-end gap-[4px]">
          <Fit w={54} className="text-[15px]">5:13 PM</Fit>
          <Fit w={77} className="text-[15px]">2025-02-10</Fit>
        </div>
        <Slot c="mr-[15px] w-[40px]"><Bell c="h-[20px] w-[19px]" /></Slot>
      </div>
    </div>
  );
}

export default function App() {
  return (
    <div className="relative flex h-[1080px] w-[1920px] flex-col overflow-hidden bg-[#0d0d0d] font-['Open_Sans',sans-serif]">
      <div className="flex h-[60px] shrink-0 justify-end text-[#e4e4e4]">
        <div className="flex h-[52px] items-center">
          <Slot c="w-[57px]"><div className="h-[1.500px] w-[13px] bg-[#bdbdbd]" /></Slot>
          <Slot c="w-[57px]"><Restore c="h-[15px] w-[15px]" /></Slot>
          <Slot c="mr-[2px] w-[57px]"><X size={19} strokeWidth={1.400} /></Slot>
        </div>
      </div>
      <div className="flex h-[116px] shrink-0 items-start pl-[360px]">
        <div className="flex h-[113px] w-[1200px] rounded-[10px] bg-[#222222]">
          {people.map((p) => <Tile key={p.name} p={p} />)}
        </div>
        <Slot c="ml-[17px] mt-[36px] h-[40px] w-[40px] rounded-full border-[3px] border-white bg-[#0e71eb] text-white"><ChevronRight size={24} strokeWidth={1.900} /></Slot>
      </div>
      <SharedScreen />
      <DesktopTaskbar />
      <Ink />
    </div>
  );
}
